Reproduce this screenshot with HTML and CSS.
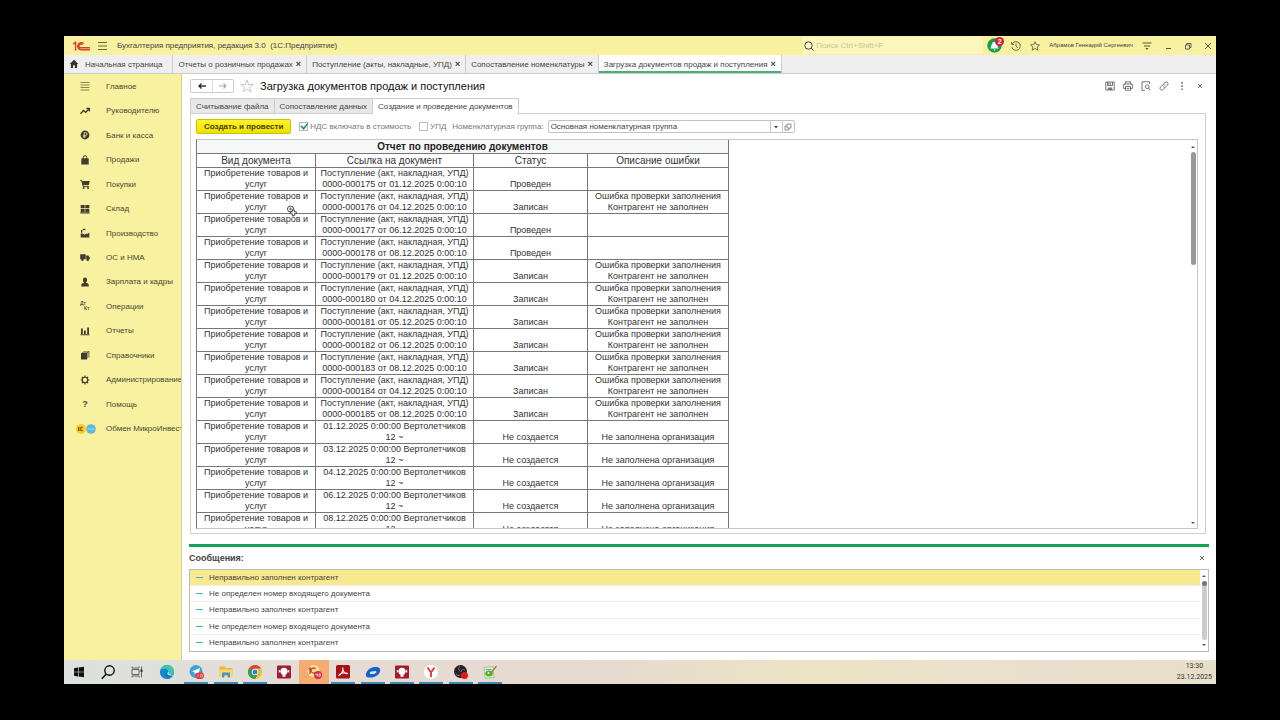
FILE: index.html
```html
<!DOCTYPE html>
<html lang="ru">
<head>
<meta charset="utf-8">
<title>Бухгалтерия предприятия, редакция 3.0</title>
<link rel="stylesheet" href="styles.css">
</head>
<body>
<div class="screen">
  <header class="titlebar">
    <svg class="logo" viewBox="0 0 18 10"><g fill="none" stroke="#d8402c" stroke-width="1.4"><path d="M1 3.2 3.6 1.4V9.4M11.8 2.6A3.6 3.6 0 1 0 9 8.8H18M10.3 3.8A1.9 1.9 0 1 0 9 6.8H18"/></g></svg>
    <button class="plain" aria-label="Меню"><svg class="i10" viewBox="0 0 10 10"><path d="M1 1.5h9M1 5h9M1 8.5h9" stroke="#6b673f" fill="none"/></svg></button>
    <span class="apptitle">Бухгалтерия предприятия, редакция 3.0&nbsp; (1С:Предприятие)</span>
    <label class="search"><svg class="i10" viewBox="0 0 10 10"><g fill="none" stroke="#444"><circle cx="4.5" cy="4.5" r="3.7"/><path d="m7.2 7.2 2.3 2.5"/></g></svg><input type="search" aria-label="Поиск" placeholder="Поиск Ctrl+Shift+F"></label>
    <div class="usertools">
      <button class="plain bell" aria-label="Уведомления"><svg viewBox="0 0 15 15"><circle cx="7.5" cy="7.5" r="7.2" fill="#12a048"/><path d="M3 10.5c2-1 1-6.800 4.500-6.800s2.500 5.800 4.500 6.800z" fill="#fff"/><path d="M6.300 11.500h2.500l-1.200 1.300z" fill="#fff"/></svg><span class="badge">2</span></button>
      <button class="plain" aria-label="История"><svg class="i10" viewBox="0 0 10 10"><g fill="none" stroke="#58553a" stroke-width=".9"><path d="M1.200 3A4.300 4.300 0 1 1 .8 6M.6 1.200V3.400H2.900M5 2.500V5.200L6.800 6.800"/></g></svg></button>
      <button class="plain" aria-label="Избранное"><svg class="i10" viewBox="0 0 10 10"><path d="m5 .7 1.300 2.900 3.200.3-2.400 2.100.7 3.200L5 7.500 2.200 9.200l.7-3.200L.5 3.900l3.200-.3z" fill="none" stroke="#58553a" stroke-width=".8"/></svg></button>
      <span class="user">Абрамов Геннадий Сергеевич</span>
      <button class="plain" aria-label="Настройки"><svg class="i10" viewBox="0 0 10 10"><path d="M.5 2h9M2 5h6" stroke="#58553a"/><path d="M3.500 7h3L5 9z" fill="#58553a"/></svg></button>
    </div>
    <div class="winbuttons">
      <button class="plain" aria-label="Свернуть"><svg class="i8" viewBox="0 0 8 8"><path d="M2 6.500h5" stroke="#555"/></svg></button>
      <button class="plain" aria-label="Развернуть"><svg class="i8" viewBox="0 0 8 8"><path d="M1.500 3h4v4h-4zM2.500 3V1.500h4.500v4H5.500" stroke="#555" fill="none" stroke-width=".9"/></svg></button>
      <button class="plain" aria-label="Закрыть"><svg class="i8" viewBox="0 0 8 8"><path d="m1 1 6 6M7 1 1 7" stroke="#444" stroke-width=".9"/></svg></button>
    </div>
  </header>

  <nav class="wintabs" aria-label="Открытые окна">
    <button class="wintab home"><svg class="i10" viewBox="0 0 10 10"><path d="M5 .8.7 5h1.200v4h2.200V6.200h1.800V9h2.200V5h1.200z" fill="#333"/></svg>Начальная страница</button>
    <button class="wintab">Отчеты о розничных продажах<span class="x">×</span></button>
    <button class="wintab">Поступление (акты, накладные, УПД)<span class="x">×</span></button>
    <button class="wintab">Сопоставление номенклатуры<span class="x">×</span></button>
    <button class="wintab current">Загрузка документов продаж и поступления<span class="x">×</span></button>
  </nav>

  <div class="workspace">
    <nav class="sections" aria-label="Разделы">
      <div class="sectionlist">
      <a href="#"><svg class="i10" viewBox="0 0 10 10"><path d="M.5 1.500h9M.5 4h9M.5 6.500h9M.5 9h9" stroke="#8b8550"/></svg>Главное</a>
      <a href="#"><svg class="i10" viewBox="0 0 10 10"><path d="m.5 7.800 3-3.300L5.700 6.300 9 3M6.500 2.500h3v3" fill="none" stroke="#403d2c" stroke-width="1.300"/></svg>Руководителю</a>
      <a href="#"><svg class="i10" viewBox="0 0 10 10"><circle cx="5" cy="5" r="4.400" fill="#403d2c"/><path d="M4.200 8V2.700h1.500a1.300 1.300 0 0 1 0 2.700H3.200M3.200 6.700h2.500" fill="none" stroke="#f6f09c" stroke-width=".8"/></svg>Банк и касса</a>
      <a href="#"><svg class="i10" viewBox="0 0 10 10"><path d="M1.300 3.300h7.400V9.500H1.300z" fill="#403d2c"/><path d="M3.300 4.500V2.400a1.700 1.700 0 0 1 3.400 0v2.100" fill="none" stroke="#403d2c"/></svg>Продажи</a>
      <a href="#"><svg class="i10" viewBox="0 0 10 10"><path d="M.2 1.400h1.500l1.400 6h5.700" fill="none" stroke="#403d2c"/><path d="M2 2h7.800L8.800 6H3z" fill="#403d2c"/><circle cx="3.600" cy="9" r="1" fill="#403d2c"/><circle cx="8" cy="9" r="1" fill="#403d2c"/></svg>Покупки</a>
      <a href="#"><svg class="i10" viewBox="0 0 10 10"><path d="M.7 1h4v3.300h-4zM5.300 1h4v3.300h-4zM.7 4.900h4v3.300h-4zM5.300 4.900h4v3.300h-4zM.3 8.500h9.400v.9H.3z" fill="#403d2c"/></svg>Склад</a>
      <a href="#"><svg class="i10" viewBox="0 0 10 10"><path d="M.7 9.500V5.500h2l2 1.200 2-1.700v1.500L9.300 4.500v5zM1 4.800V2h1.300v2.800zM2.800.8h2.500v1.400H2.800z" fill="#403d2c"/></svg>Производство</a>
      <a href="#"><svg class="i10" viewBox="0 0 10 10"><path d="M.2 2.300h5.500v5H.2zM6.200 3.500h2L9.800 5.400v1.900H6.200z" fill="#403d2c"/><circle cx="2.400" cy="7.800" r="1.200" fill="#403d2c"/><circle cx="7.700" cy="7.800" r="1.200" fill="#403d2c"/></svg>ОС и НМА</a>
      <a href="#"><svg class="i10" viewBox="0 0 10 10"><path d="M1.300 9.400V7.600q0-1 2.700-1.800L3 4V2.500a2 2 0 0 1 4 0V4L6 5.800q2.700.8 2.700 1.800v1.800z" fill="#403d2c"/></svg>Зарплата и кадры</a>
      <a href="#"><svg class="i10" viewBox="0 0 10 10"><g fill="#59553d" font-family="Liberation Sans" font-size="5" font-weight="700"><text x="0" y="4">Дт</text><text x="4" y="9">Кт</text></g></svg>Операции</a>
      <a href="#"><svg class="i10" viewBox="0 0 10 10"><path d="M1 2.500h1.800V8H1zM4 4.500h1.800V8H4zM7.200 1.500H9V8H7.200zM.5 8.300h9v.9h-9z" fill="#403d2c"/></svg>Отчеты</a>
      <a href="#"><svg class="i10" viewBox="0 0 10 10"><path d="M1 3h6v6.500H1zM2 2.500V2h6v6.500h-.5v-6zM3.300 1.500V1h6v6.500h-.8v-6z" fill="#403d2c"/></svg>Справочники</a>
      <a href="#"><svg class="i10" viewBox="0 0 10 10"><circle cx="5" cy="5" r="2.700" fill="none" stroke="#403d2c" stroke-width="1.100"/><path d="M5 .6v1.600M5 7.800v1.600M.6 5h1.600M7.800 5h1.600M1.900 1.900 3 3M7 7l1.100 1.100M8.100 1.900 7 3M3 7 1.900 8.100" stroke="#403d2c" stroke-width="1.200"/></svg>Администрирование</a>
      <a href="#"><b class="question">?</b>Помощь</a>
      <a href="#"><svg class="exchange" viewBox="0 0 20 10"><circle cx="5" cy="5" r="5" fill="#f7cf20"/><circle cx="15" cy="5" r="4.800" fill="#5bb8e2"/><path d="M2.500 3v4M4 3v4M7 3.300H5v3.400h2" stroke="#a24a16" fill="none"/><path d="M11.500 5h7" stroke="#a4d8ed"/></svg>Обмен МикроИнвест</a>
      </div>
    </nav>

    <main class="content">
      <div class="pagehead">
        <div class="history">
          <button aria-label="Назад"><svg class="i10" viewBox="0 0 10 10"><path d="M9 5H2M4.500 2.500 2 5l2.500 2.500" fill="none" stroke="#333" stroke-width="1.400"/></svg></button>
          <button aria-label="Вперед"><svg class="i10" viewBox="0 0 10 10"><path d="M1 5h7M5.500 2.500 8 5 5.500 7.500" fill="none" stroke="#aaa" stroke-width="1.200"/></svg></button>
        </div>
        <button class="plain" aria-label="В избранное"><svg class="star" viewBox="0 0 14 14"><path d="m7 .8 1.500 4.700h4.800L9.400 8.300l1.500 4.700L7 10.100 3.100 13l1.500-4.700L.7 5.500h4.800z" fill="#fff" stroke="#bbb" stroke-width=".8"/></svg></button>
        <h1>Загрузка документов продаж и поступления</h1>
        <div class="headtools">
          <button class="plain" aria-label="Сохранить"><svg class="i10" viewBox="0 0 10 10"><path d="M.8 1h8.400v8H.8zM2.500 1v3.500h5V1M3.800 1.500v2.300M5.300 1.500v2.300" fill="none" stroke="#666" stroke-width=".9"/><path d="M2.800 6.500h4.400V9H2.800z" fill="#777"/></svg></button>
          <button class="plain" aria-label="Печать"><svg class="i10" viewBox="0 0 10 10"><path d="M2.500 3V.8h5V3M2.500 7.500H.6V3h8.800v4.500H7.500M2.500 5.500h5v3.800h-5zM3.500 7.300h3" fill="none" stroke="#666" stroke-width=".9"/></svg></button>
          <button class="plain" aria-label="Просмотр"><svg class="i10" viewBox="0 0 10 10"><path d="M4 9.300H1V.8h7.500V3" fill="none" stroke="#666" stroke-width=".9"/><circle cx="6.200" cy="5.700" r="1.900" fill="none" stroke="#666" stroke-width=".9"/><path d="m7.500 7.200 1.900 2.200" stroke="#666"/></svg></button>
          <button class="plain" aria-label="Ссылка"><svg class="i10" viewBox="0 0 10 10"><path d="M4.200 3.300 6 1.500a1.700 1.700 0 0 1 2.500 2.500L6.600 5.900a1.700 1.700 0 0 1-2.300 0M5.700 4.200a1.700 1.700 0 0 0-2.300 0L1.500 6.100A1.700 1.700 0 0 0 4 8.600l1.800-1.800" fill="none" stroke="#666" stroke-width=".9"/></svg></button>
          <button class="plain" aria-label="Ещё"><svg class="i10" viewBox="0 0 10 10"><path d="M4.300 1h1.400v1.700H4.300zM4.300 4.200h1.400v1.700H4.300zM4.300 7.400h1.400V9H4.300z" fill="#666"/></svg></button>
          <button class="plain" aria-label="Закрыть страницу"><svg class="i10" viewBox="0 0 10 10"><path d="m3 3 4 4M7 3 3 7" stroke="#555" stroke-width=".9"/></svg></button>
        </div>
      </div>

      <div class="steps" role="tablist">
        <button role="tab">Считывание файла</button>
        <button role="tab">Сопоставление данных</button>
        <button role="tab" aria-selected="true" class="active">Создание и проведение документов</button>
      </div>

      <section class="pane">
        <div class="toolbar">
          <button class="primary">Создать и провести</button>
          <label class="check"><input type="checkbox" checked>НДС включать в стоимость</label>
          <label class="check"><input type="checkbox">УПД</label>
          <label class="grouplabel" for="group">Номенклатурная группа:</label>
          <div class="combo">
            <input id="group" type="text" value="Основная номенклатурная группа">
            <button aria-label="Выбрать"><svg class="i8" viewBox="0 0 8 8"><path d="M2 3h4L4 5.500z" fill="#444"/></svg></button>
            <button aria-label="Открыть"><svg class="i8" viewBox="0 0 8 8"><path d="M3 1h4v4H3zM3 3H1v4h4V5" fill="none" stroke="#777" stroke-width=".8"/></svg></button>
          </div>
        </div>

        <div class="doc">
          <div class="sheet">
            <table>
              <colgroup><col class="ckind"><col class="clink"><col class="cstatus"><col class="cerror"></colgroup>
              <thead>
                <tr class="caption"><th colspan="4">Отчет по проведению документов</th></tr>
                <tr class="names"><th>Вид документа</th><th>Ссылка на документ</th><th>Статус</th><th>Описание ошибки</th></tr>
              </thead>
              <tbody>
                <tr><td>Приобретение товаров и<br>услуг</td><td>Поступление (акт, накладная, УПД)<br>0000-000175 от 01.12.2025 0:00:10</td><td>Проведен</td><td></td></tr>
                <tr><td>Приобретение товаров и<br>услуг</td><td>Поступление (акт, накладная, УПД)<br>0000-000176 от 04.12.2025 0:00:10</td><td>Записан</td><td>Ошибка проверки заполнения<br>Контрагент не заполнен</td></tr>
                <tr><td>Приобретение товаров и<br>услуг</td><td>Поступление (акт, накладная, УПД)<br>0000-000177 от 06.12.2025 0:00:10</td><td>Проведен</td><td></td></tr>
                <tr><td>Приобретение товаров и<br>услуг</td><td>Поступление (акт, накладная, УПД)<br>0000-000178 от 08.12.2025 0:00:10</td><td>Проведен</td><td></td></tr>
                <tr><td>Приобретение товаров и<br>услуг</td><td>Поступление (акт, накладная, УПД)<br>0000-000179 от 01.12.2025 0:00:10</td><td>Записан</td><td>Ошибка проверки заполнения<br>Контрагент не заполнен</td></tr>
                <tr><td>Приобретение товаров и<br>услуг</td><td>Поступление (акт, накладная, УПД)<br>0000-000180 от 04.12.2025 0:00:10</td><td>Записан</td><td>Ошибка проверки заполнения<br>Контрагент не заполнен</td></tr>
                <tr><td>Приобретение товаров и<br>услуг</td><td>Поступление (акт, накладная, УПД)<br>0000-000181 от 05.12.2025 0:00:10</td><td>Записан</td><td>Ошибка проверки заполнения<br>Контрагент не заполнен</td></tr>
                <tr><td>Приобретение товаров и<br>услуг</td><td>Поступление (акт, накладная, УПД)<br>0000-000182 от 06.12.2025 0:00:10</td><td>Записан</td><td>Ошибка проверки заполнения<br>Контрагент не заполнен</td></tr>
                <tr><td>Приобретение товаров и<br>услуг</td><td>Поступление (акт, накладная, УПД)<br>0000-000183 от 08.12.2025 0:00:10</td><td>Записан</td><td>Ошибка проверки заполнения<br>Контрагент не заполнен</td></tr>
                <tr><td>Приобретение товаров и<br>услуг</td><td>Поступление (акт, накладная, УПД)<br>0000-000184 от 04.12.2025 0:00:10</td><td>Записан</td><td>Ошибка проверки заполнения<br>Контрагент не заполнен</td></tr>
                <tr><td>Приобретение товаров и<br>услуг</td><td>Поступление (акт, накладная, УПД)<br>0000-000185 от 08.12.2025 0:00:10</td><td>Записан</td><td>Ошибка проверки заполнения<br>Контрагент не заполнен</td></tr>
                <tr><td>Приобретение товаров и<br>услуг</td><td>01.12.2025 0:00:00 Вертолетчиков<br>12 ~</td><td>Не создается</td><td>Не заполнена организация</td></tr>
                <tr><td>Приобретение товаров и<br>услуг</td><td>03.12.2025 0:00:00 Вертолетчиков<br>12 ~</td><td>Не создается</td><td>Не заполнена организация</td></tr>
                <tr><td>Приобретение товаров и<br>услуг</td><td>04.12.2025 0:00:00 Вертолетчиков<br>12 ~</td><td>Не создается</td><td>Не заполнена организация</td></tr>
                <tr><td>Приобретение товаров и<br>услуг</td><td>06.12.2025 0:00:00 Вертолетчиков<br>12 ~</td><td>Не создается</td><td>Не заполнена организация</td></tr>
                <tr><td>Приобретение товаров и<br>услуг</td><td>08.12.2025 0:00:00 Вертолетчиков<br>12 ~</td><td>Не создается</td><td>Не заполнена организация</td></tr>
              </tbody>
            </table>
          </div>
          <div class="scroll"><span class="up"></span><span class="track"><span class="thumb"></span></span><span class="down"></span></div>
        </div>
      </section>

      <section class="messages">
        <div class="msghead"><h2>Сообщения:</h2><button class="plain" aria-label="Закрыть сообщения"><svg class="i8" viewBox="0 0 8 8"><path d="m2 2 4 4M6 2 2 6" stroke="#555" stroke-width=".9"/></svg></button></div>
        <div class="msgbox">
          <ul>
            <li class="selected">Неправильно заполнен контрагент</li>
            <li>Не определен номер входящего документа</li>
            <li>Неправильно заполнен контрагент</li>
            <li>Не определен номер входящего документа</li>
            <li>Неправильно заполнен контрагент</li>
          </ul>
          <div class="scroll"><span class="up"></span><span class="track full"><span class="knob"></span></span><span class="down"></span></div>
        </div>
      </section>
    </main>
  </div>

  <footer class="taskbar">
    <div class="apps">
      <button aria-label="Пуск"><svg viewBox="0 0 16 16"><path d="m3 4.200 4-.6v4.100H3zM7.600 3.500l5.400-.8v5H7.600zM3 8.300h4v4.100l-4-.6zM7.600 8.300H13v5l-5.400-.8z" fill="#111"/></svg></button>
      <button aria-label="Поиск Windows"><svg viewBox="0 0 16 16"><circle cx="9.500" cy="6.500" r="4.700" fill="none" stroke="#111" stroke-width="1.400"/><path d="m6.300 10-4.500 4.700" stroke="#111" stroke-width="1.500"/></svg></button>
      <button aria-label="Представление задач"><svg viewBox="0 0 16 16"><g fill="none" stroke="#555" stroke-width=".9"><path d="M3 5.500h7v5H3zM3 2.500v1.500h7V2.500M3 13.500V12h7v1.500M12.500 2.500v11"/></g><path d="M11.500 5.500h2v2.500h-2z" fill="#333"/></svg></button>
      <button aria-label="Edge"><svg viewBox="0 0 16 16"><circle cx="8" cy="8" r="7" fill="#1578c8"/><path d="M1.200 6.500C2.300 2.500 5.500 1 8 1c4 0 7 3 7 6 0 2.500-2 4-4.500 3.500C9 10 9.800 9 9.500 7.500 9 5 4 4 1.200 6.500" fill="#3cc8a2"/><path d="M1.100 7C3 4 8.500 4 9.300 7c-3-.5-4 2-3 4.500S10 14.500 12 14C7 16.500 1 13.500 1.100 7" fill="#1686d6"/><path d="M9.500 7.500C7.500 9 8 12 14 11.500 15.500 10 14 11 11 10.600 9 10 9.800 9 9.500 7.500" fill="#e4f0ec"/></svg></button>
      <button class="open" aria-label="Telegram"><svg viewBox="0 0 16 16"><circle cx="8" cy="7.500" r="6.500" fill="#35a5dc"/><path d="m3.500 7.500 8.500-3.500-1.500 7-2.500-2-1.300 1.300-.5-2.500z" fill="#fff"/><rect x="7.500" y="8.500" width="8.500" height="6.500" rx="3" fill="#db3d43"/><path d="M10 10.500v2.500M12.500 10.500h2v2.500h-2z" fill="none" stroke="#fbb" stroke-width=".7"/></svg></button>
      <button class="open" aria-label="Проводник"><svg viewBox="0 0 16 16"><path d="M1.500 2.500h5l1 1.500h7V13h-13z" fill="#e9b73e"/><path d="M1.500 5.500h13v7.500h-13z" fill="#f8d970"/><path d="M4 13.500V8.500h8v5H9.800v-2.300H6.200v2.300z" fill="#4a92d0"/></svg></button>
      <button class="open" aria-label="Chrome"><svg viewBox="0 0 16 16"><circle cx="8" cy="8" r="7" fill="#eac12f"/><path d="M8 8 1.900 4.500A7 7 0 0 1 14.100 4.500H8z" fill="#dc4438"/><path d="M8 8 1.900 4.500A7 7 0 0 0 8 15l3-5.200z" fill="#2d9e52"/><circle cx="8" cy="8" r="3.300" fill="#fff"/><circle cx="8" cy="8" r="2.500" fill="#3f7fe0"/></svg></button>
      <button aria-label="Удаленный доступ"><svg viewBox="0 0 16 16"><rect x="1" y="1.500" width="14" height="13" rx="1" fill="#a01c31"/><circle cx="8" cy="7.300" r="3.600" fill="#fff"/><path d="M2.800 5.500v3.500L4.500 7.300zM13.200 5.500v3.500l-1.700-1.700zM6.500 11h3v1.800h-3z" fill="#fff"/></svg></button>
      <button class="current" aria-label="1С:Предприятие"><svg viewBox="0 0 16 16"><circle cx="7.500" cy="7" r="6" fill="#f6e29a"/><path d="m2.500 5 1.500-1v6M9.500 5A2.500 2.500 0 1 0 8 9h4" fill="none" stroke="#c7442d" stroke-width="1.300"/><circle cx="12" cy="11" r="4" fill="#d3304c"/><path d="m10 9.500v1.500h1.500M11.500 9.500v3M13 9.800h1.300v2.500H13z" fill="none" stroke="#fff" stroke-width=".6"/></svg></button>
      <button class="open" aria-label="Acrobat"><svg viewBox="0 0 16 16"><rect x="1" y="1" width="14" height="13.500" rx="1.500" fill="#a91116"/><path d="M7.800 3.500c.8 3-1.800 7.500-3.800 7.800 1-2 6-3.300 8.300-1.800C10 10.500 7.500 7 7.800 3.500" fill="none" stroke="#fff" stroke-width="1.100"/></svg></button>
      <button class="open" aria-label="Облако"><svg viewBox="0 0 16 16"><path d="M1 12C0 9 4 3.500 9 3c5-.6 7 1.500 6 4.500C14 11 10 13.500 6 13.500 3 13.500 1.500 13.300 1 12" fill="#1262d0"/><path d="M4.500 9.500c1-1.500 2-2.500 4-2C9.500 6.500 11.500 7 11.500 8.200c-1 1.800-5 2.500-7 1.300" fill="#e4e8ec"/></svg></button>
      <button class="open" aria-label="Удаленный доступ"><svg viewBox="0 0 16 16"><rect x="1" y="1.500" width="14" height="13" rx="1" fill="#a01c31"/><circle cx="8" cy="7.300" r="3.600" fill="#fff"/><path d="M2.800 5.500v3.500L4.500 7.300zM13.200 5.500v3.500l-1.700-1.700zM6.500 11h3v1.800h-3z" fill="#fff"/></svg></button>
      <button class="open" aria-label="Яндекс Браузер"><svg viewBox="0 0 16 16"><circle cx="8" cy="8" r="7" fill="#fff"/><path d="m4.500 3.500 3.500 5 3.500-5M8 8v5" fill="none" stroke="#dc392b" stroke-width="1.800"/></svg></button>
      <button class="open" aria-label="OBS"><svg viewBox="0 0 16 16"><circle cx="7.500" cy="7.500" r="6.500" fill="#231f22"/><path d="M7 2.500a2.500 2.500 0 0 0 0 4.500M3 9.500a2.500 2.500 0 0 0 4.500 1M12 6a2.500 2.500 0 0 0-4 2" fill="none" stroke="#888" stroke-width=".9"/><circle cx="11.500" cy="11.500" r="3.500" fill="#e3171c"/></svg></button>
      <button class="open" aria-label="Блокнот"><svg viewBox="0 0 16 16"><path d="m2 3.500 9-1 1 11-9 .8z" fill="#e3efd7" stroke="#92b96e" stroke-width=".7"/><path d="M3.500 5.500h6" stroke="#6a9bb2"/><ellipse cx="7" cy="9.500" rx="3.800" ry="3" fill="#51b42f"/><path d="m8.500 9.500 6-7.500" stroke="#aa7b35" stroke-width="1.300"/><circle cx="6.500" cy="9" r=".9" fill="#fff"/></svg></button>
    </div>
    <div class="clock"><span>13:30</span><span>23.12.2025</span></div>
  </footer>
</div>
<svg class="cursor" viewBox="0 0 12 12"><circle cx="4.500" cy="4" r="3" fill="#fff" stroke="#444"/><path d="M3 4h3M4.500 2.500v3" stroke="#555" stroke-width=".8"/><path d="M6.300 4.800h2v2h2v2h-2v2h-2v-2h-2v-2h2z" fill="#fff" stroke="#333" stroke-width=".9"/></svg>
</body>
</html>
```
FILE: styles.css
```css
* { box-sizing: border-box; }

body {
  margin: 0;
  height: 100vh;
  padding: 36px 64px;
  background: #000;
  color: #444;
  font: 8px/11px "Liberation Sans", Arial, sans-serif;
}

button, input { font: inherit; color: inherit; margin: 0; padding: 0; }
button { border: 0; background: none; white-space: nowrap; }
svg { display: block; flex: none; }
h1, h2, ul { margin: 0; padding: 0; font-weight: 400; }

.i10 { width: 10px; height: 10px; }
.i8 { width: 8px; height: 8px; }
.plain { display: flex; align-items: center; justify-content: center; }

.screen { height: 100%; display: flex; flex-direction: column; background: #fff; overflow: hidden; }

.titlebar { flex: none; height: 19px; display: flex; align-items: center; padding: 0 4px 0 8px; background: #f7f1a0; }
.logo { width: 18px; height: 10px; margin-right: 7px; }
.apptitle { margin-left: 10px; white-space: nowrap; }
.search { width: 180px; height: 17px; margin-left: auto; padding-left: 1px; display: flex; align-items: center; gap: 2px; background: #fbf6bd; }
.search input { flex: 1; min-width: 0; border: 0; background: none; outline: 0; }
.search input::placeholder { color: #c9c493; opacity: 1; }
.usertools { display: flex; align-items: center; gap: 9px; margin-left: 4px; }
.bell { position: relative; }
.bell svg { width: 15px; height: 15px; }
.badge { position: absolute; top: -1px; right: -2px; width: 9px; height: 9px; border-radius: 50%; background: #d71f38; color: #fff; font-size: 7px; line-height: 9px; font-weight: 700; }
.user { font-size: 6px; white-space: nowrap; }
.winbuttons { display: flex; gap: 12px; margin-left: 12px; }

.wintabs { flex: none; height: 19px; display: flex; background: #efefef; border-bottom: 1px solid #ccc; }
.wintab { display: flex; align-items: center; gap: 3px; padding: 0 5px; border-right: 1px solid #ccc; }
.home { gap: 6px; padding: 0 10px 0 5px; }
.x { font-size: 9px; font-weight: 700; }
.current.wintab { background: #fff; box-shadow: inset 0 -2px #4bb078; }

.workspace { flex: 1; min-height: 0; display: flex; }
.sections { flex: none; width: 118px; background: #f7f1a0; border-right: 1px solid #d8d28c; overflow: hidden; }
.sectionlist { height: 367px; display: grid; grid-auto-rows: 1fr; }
.sections a { display: flex; align-items: center; padding-left: 16px; gap: 16px; color: #4b4834; text-decoration: none; white-space: nowrap; }
.question { width: 10px; text-align: center; font-size: 9px; }
.exchange { width: 20px; height: 10px; margin: 0 -6px 0 -4px; }

.content { flex: 1; min-width: 0; display: flex; flex-direction: column; padding: 0 7px 8px; }
.pagehead { flex: none; height: 24px; display: flex; align-items: center; gap: 6px; }
.history { display: flex; border: 1px solid #ccc; border-radius: 2px; margin-left: 1px; }
.history button { width: 21px; height: 12px; display: flex; align-items: center; justify-content: center; }
.history button + button { border-left: 1px solid #ddd; }
.star { width: 14px; height: 14px; }
h1 { color: #111; font-size: 11px; line-height: 14px; white-space: nowrap; }
.headtools { display: flex; gap: 8px; margin: 0 4px 0 auto; }

.steps { flex: none; display: flex; height: 15px; padding-left: 1px; }
.steps button { padding: 0 5px; border: 1px solid #ccc; border-bottom: 0; border-left-width: 0; background: #e8e8e8; }
.steps button:first-child { border-left-width: 1px; }
.steps .active { background: #fff; margin-bottom: -1px; position: relative; }

.pane { flex: 1; min-height: 0; display: flex; flex-direction: column; margin: 0 3px 10px 1px; padding: 0 7px 4px 5px; border: 1px solid #d0d0d0; }
.toolbar { flex: none; height: 25px; display: flex; align-items: center; }
.primary { height: 15px; padding: 0 7px; border: 1px solid #cfc100; border-radius: 2px; background: linear-gradient(#fff22a, #eee000); color: #444000; font-weight: 700; }
.check { display: flex; align-items: center; gap: 2px; margin-left: 8px; color: #777; white-space: nowrap; }
.check input { appearance: none; width: 9px; height: 9px; border: 1px solid #bbb; background: #fff; }
.check input:checked::before { content: ""; display: block; width: 8px; height: 7px; background: #079a4c; clip-path: polygon(0 45%, 20% 35%, 40% 65%, 90% 0, 100% 10%, 42% 100%); }
.grouplabel { margin: 0 4px 0 6px; color: #777; white-space: nowrap; }
.combo { width: 247px; height: 13px; display: flex; border: 1px solid #c2c2c2; border-radius: 2px; }
.combo input { flex: 1; min-width: 0; padding-left: 2px; border: 0; background: none; outline: 0; }
.combo button { width: 12px; display: flex; align-items: center; justify-content: center; border-left: 1px solid #ccc; }

.doc { flex: 1; min-height: 0; display: flex; border: 1px solid #c6c6c6; border-left-color: #777; overflow: hidden; }
.sheet { flex: 1; min-width: 0; overflow: hidden; }
table { width: 532px; table-layout: fixed; border-spacing: 0; color: #333; font-size: 9px; line-height: 11px; }
.ckind { width: 119px; }
.clink { width: 158px; }
.cstatus { width: 114px; }
.cerror { width: 141px; }
th, td { padding: 0; height: 23px; border: 0 solid #777; border-width: 0 1px 1px 0; text-align: center; vertical-align: bottom; font-weight: 400; white-space: nowrap; }
.caption th { height: 14px; line-height: 13px; background: #f7f8f8; color: #222; font-size: 10px; font-weight: 700; }
.names th { height: 14px; line-height: 13px; font-size: 10px; }

.scroll { flex: none; width: 8px; display: flex; flex-direction: column; align-items: center; padding: 6px 0 4px; }
.up, .down { border: 2px solid transparent; border-top-width: 0; border-bottom: 2px solid #555; }
.down { border-top: 2px solid #555; border-bottom-width: 0; }
.track { flex: 1; width: 5px; margin: 4px 0; display: flex; flex-direction: column; }
.thumb { height: 31%; border-radius: 3px; background: #999; }
.full { border-radius: 3px; background: #ccc; }
.knob { height: 5px; border-radius: 3px; background: #777; }

.messages { flex: none; }
.msghead { height: 25px; display: flex; align-items: center; justify-content: space-between; padding-right: 3px; border-top: 3px solid #16a058; }
h2 { font-size: 9px; font-weight: 700; color: #444; }
.msgbox { display: flex; border: 1px solid #bbb; }
.msgbox ul { flex: 1; height: 81px; display: grid; grid-auto-rows: 1fr; list-style: none; }
.msgbox li { display: flex; align-items: center; gap: 6px; padding-left: 6px; border-bottom: 1px solid #eee; }
.msgbox li:last-child { border-bottom: 0; }
.msgbox li::before { content: ""; width: 7px; height: 1px; background: #42aacb; }
.msgbox .selected { background: #f8e88e; }
.msgbox .scroll { padding: 5px 0; }

.taskbar { flex: none; height: 24px; display: flex; justify-content: space-between; background: linear-gradient(90deg, #dce2df, #e6dcd6 20%, #e7d9d0 45%, #eee3c5 65%, #eadfce 85%, #e8dfca); }
.apps { width: 441px; display: grid; grid-template-columns: repeat(15, 1fr); }
.apps button { display: flex; align-items: center; justify-content: center; padding-bottom: 1px; }
.apps svg { width: 16px; height: 16px; }
.apps .open { background: linear-gradient(#3c87ad, #3c87ad) bottom / 24px 2px no-repeat; }
.apps .current { background: #f5ac72; }
.clock { display: flex; flex-direction: column; align-items: center; justify-content: center; padding-right: 4px; color: #333; font-family: Roboto, sans-serif; font-size: 7px; line-height: 11px; }

.cursor { position: absolute; left: 286px; top: 205px; width: 12px; height: 12px; }
```
